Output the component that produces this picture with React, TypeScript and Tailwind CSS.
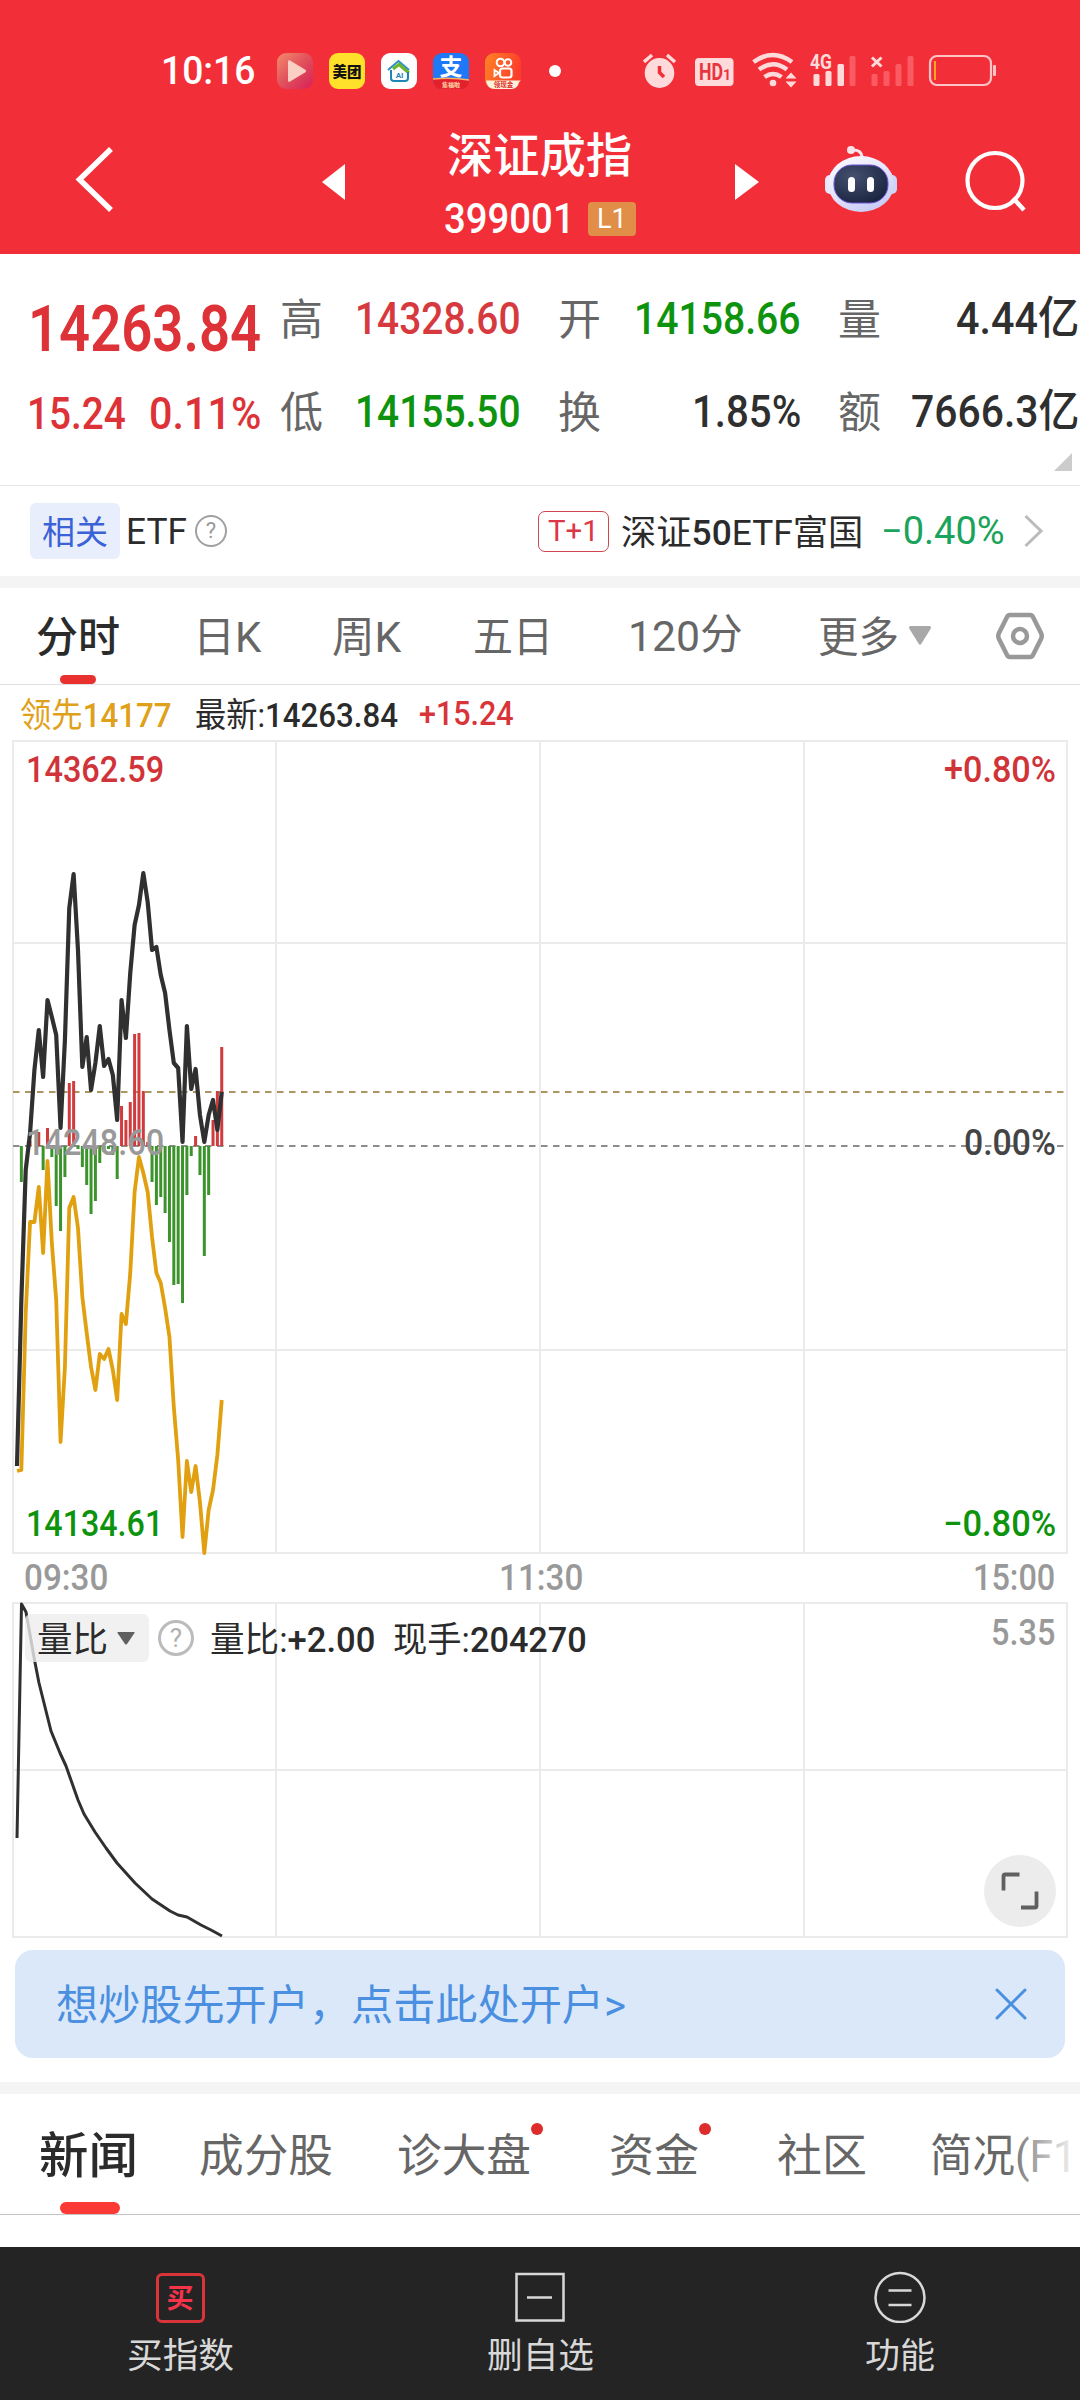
import { useLayoutEffect, useRef, ReactNode } from 'react';
import clsx from 'clsx';


type FitProps = {
    children: ReactNode;
    className?: string;
};

// Narrows (or widens) a line of text to the width of its box
const Fit = ({ children, className }: FitProps) => {

    const box = useRef<HTMLSpanElement>(null);
    const text = useRef<HTMLSpanElement>(null);

    useLayoutEffect(() => {
        if (!box.current || !text.current) return;
        const ratio = box.current.clientWidth / text.current.offsetWidth;
        // Chinese glyphs sit a bit higher than the latin ones
        const shift = /^[\u4e00-\u9fff]/.test(text.current.textContent ?? '') ? 0.045 : 0.01;
        text.current.style.transform = `translateY(${ shift }em) scaleX(${ ratio })`;
    }, [ children ])

    return (
        <span ref={ box } className={ clsx('block shrink-0 whitespace-nowrap leading-none', className) }>
            <span ref={ text } className="inline-block origin-left leading-none align-top">{ children }</span>
        </span>
    )
}


const CHART_LEFT = 12;
const CHART_TOP = 740;
const BASE = 1146;

const minuteX = (i: number) => 17 + 4.356 * i;

const price = [
    1466, 1300, 1170, 1133, 1070, 1030, 1077, 1000, 1017, 1035, 1128, 1040,
    908, 874, 950, 1067, 1037, 1090, 1063, 1026, 1066, 1059, 1075, 1120,
    1000, 1038, 973, 925, 905, 873, 902, 950, 947, 975, 993, 1030,
    1063, 1068, 1142, 1026, 1089, 1069, 1115, 1142, 1115, 1100, 1130, 1092,
];

const lead = [
    1471, 1470, 1313, 1222, 1222, 1187, 1253, 1161, 1243, 1300, 1442, 1367,
    1208, 1197, 1228, 1297, 1333, 1367, 1390, 1354, 1359, 1349, 1370, 1400,
    1314, 1324, 1273, 1192, 1157, 1173, 1192, 1237, 1273, 1283, 1308, 1337,
    1407, 1460, 1537, 1461, 1492, 1466, 1502, 1553, 1510, 1490, 1455, 1400,
];

// [ minute, end of the bar ]
const bars: [number, number][] = [
    [1, 1182], [3, 1141], [5, 1132], [6, 1170], [7, 1128], [8, 1157], [9, 1206], [10, 1231], [11, 1177],
    [12, 1083], [13, 1081], [14, 1149], [15, 1167], [16, 1185], [17, 1214], [18, 1201], [19, 1163],
    [20, 1152], [21, 1149], [22, 1155], [23, 1179], [24, 1106], [25, 1120], [26, 1102], [27, 1034],
    [28, 1033], [29, 1091], [30, 1142], [31, 1182], [32, 1205], [33, 1197], [34, 1213], [35, 1242],
    [36, 1285], [37, 1284], [38, 1303], [39, 1195], [40, 1156], [41, 1136], [42, 1175], [43, 1256],
    [44, 1195], [45, 1120], [46, 1091], [47, 1047],
];

const volumeRatio = '17,1838 21.5,1604 26,1612 34.5,1660 39,1683 51,1731 60,1753 66,1766 78,1800 84,1814 95,1832 106,1848 117,1863 135,1883 152,1899 170,1911 178,1915 187,1917 201,1925 211,1930 222,1936';

const toPoints = (values: number[]) => values.map((y, i) => `${ minuteX(i) },${ y }`).join(' ');


const AppIcons = () => (
    <div className="ml-[22px] flex gap-4">
        <svg width="36" height="36" viewBox="0 0 36 36">
            <defs>
                <linearGradient id="player" x1="0" y1="0" x2="1" y2="1">
                    <stop offset="0" stopColor="#f58a6c" />
                    <stop offset="0.5" stopColor="#e0505c" />
                    <stop offset="1" stopColor="#d81f58" />
                </linearGradient>
            </defs>
            <rect width="36" height="36" rx="9" fill="url(#player)" />
            <path d="M11 8.500Q11 6.500 13 7.500L28 16.500Q30 18 28 19.500L13 28.500Q11 29.500 11 27.500Z" fill="#fbd0c4" />
        </svg>
        <svg width="36" height="36" viewBox="0 0 36 36">
            <rect width="36" height="36" rx="9" fill="#ffe02b" />
            <text x="18" y="23.500" textAnchor="middle" fontSize="14.500" fontWeight="900" fontFamily="Noto Sans CJK SC, sans-serif" fill="#111">美团</text>
        </svg>
        <svg width="36" height="36" viewBox="0 0 36 36" fill="none">
            <rect width="36" height="36" rx="9" fill="#fff" />
            <path d="M7 17L17.500 8L28 17" stroke="#2b8fc0" strokeWidth="2" />
            <path d="M12 16L18 11.500L28 20" stroke="#6cb52d" strokeWidth="3" />
            <path d="M10 17V25Q10 28 13 28H24Q27 28 27 25V19" stroke="#1c86b8" strokeWidth="2" />
            <text x="18.500" y="25" textAnchor="middle" fontSize="8" fontWeight="700" fontFamily="Roboto, sans-serif" fill="#1c86b8">AI</text>
        </svg>
        <svg width="36" height="36" viewBox="0 0 36 36" className="overflow-visible">
            <rect width="36" height="36" rx="9" fill="#1f78f5" />
            <path d="M0 26Q18 24 36 27Q36 36 27 36H9Q0 36 0 26Z" fill="#e3202c" />
            <path d="M0 26Q18 24 36 27" stroke="#f7b36a" strokeWidth="1.500" fill="none" />
            <text x="18" y="21.500" textAnchor="middle" fontSize="23" fontWeight="700" fontFamily="Noto Sans CJK SC, sans-serif" fill="#fff">支</text>
            <text x="18" y="33.500" textAnchor="middle" fontSize="6" fontWeight="700" fontFamily="Noto Sans CJK SC, sans-serif" fill="#ffd9a8">集福啦</text>
        </svg>
        <svg width="36" height="36" viewBox="0 0 36 36" fill="none">
            <defs>
                <linearGradient id="camera" x1="0" y1="0" x2="1" y2="0.300">
                    <stop offset="0" stopColor="#ff8424" />
                    <stop offset="1" stopColor="#fb3d2c" />
                </linearGradient>
            </defs>
            <rect width="36" height="36" rx="9" fill="url(#camera)" />
            <circle cx="15.500" cy="9.500" r="3.800" stroke="#fff" strokeWidth="2" />
            <circle cx="23" cy="9.500" r="3.300" stroke="#fff" strokeWidth="2" />
            <rect x="15" y="15.500" width="11.500" height="9" rx="2.500" stroke="#fff" strokeWidth="2.200" />
            <path d="M14 20L9.500 17V23Z" stroke="#fff" strokeWidth="1.800" />
            <path d="M1 27.500H36Q34 28 33 32Q31 36 26 36H10Q2 36 1 27.500Z" fill="#fff0dc" />
            <text x="18.500" y="34" textAnchor="middle" fontSize="6.500" fontWeight="700" fontFamily="Noto Sans CJK SC, sans-serif" fill="#d9302a">领现金</text>
        </svg>
    </div>
)


const SystemIcons = () => (
    <svg width="354" height="40" viewBox="643 51 354 40" className="ml-[82px]" fill="none">
        <g fill="#ffdadb">
            <ellipse cx="659.500" cy="73" rx="14.800" ry="15" />
            <path d="M644 62L652 55M667 55L675 62" stroke="#ffdadb" strokeWidth="3.500" />
            <path d="M659.500 66V72.500L664 77" stroke="#f22f38" strokeWidth="3.500" />
            <rect x="695" y="58" width="38.500" height="28" rx="4" />
            <path d="M753.500 62Q773 48 792 62" stroke="#ffdadb" strokeWidth="4.500" fill="none" />
            <path d="M759 69.500Q773 59 787 69.500" stroke="#ffdadb" strokeWidth="4.500" fill="none" />
            <path d="M764.500 77Q773 71 781.500 77" stroke="#ffdadb" strokeWidth="4.500" fill="none" />
            <circle cx="773" cy="83" r="3.300" />
            <path d="M785.500 78.500L791 72.500L796.500 78.500ZM785.500 81.500L791 87.500L796.500 81.500Z" />
            <rect x="813.500" y="74" width="6" height="12" rx="1.500" />
            <rect x="825.500" y="71" width="6" height="15" rx="1.500" />
            <rect x="837.500" y="64" width="6.500" height="22" rx="1.500" />
        </g>
        <text x="699" y="80" fontSize="23" fontWeight="700" fontFamily="Roboto, sans-serif" fill="#e8343c" textLength="24" lengthAdjust="spacingAndGlyphs">HD</text>
        <text x="723" y="80" fontSize="14" fontWeight="700" fontFamily="Roboto, sans-serif" fill="#e8343c">1</text>
        <text x="810" y="69" fontSize="20" fontWeight="700" fontFamily="Roboto, sans-serif" fill="#ffdadb" textLength="22" lengthAdjust="spacingAndGlyphs">4G</text>
        <g fill="#fa5b62">
            <rect x="849.500" y="56" width="6" height="30" rx="1.500" />
            <rect x="871.500" y="74" width="6" height="12" rx="1.500" />
            <rect x="883.500" y="71" width="6" height="15" rx="1.500" />
            <rect x="895.500" y="64" width="6" height="22" rx="1.500" />
            <rect x="907.500" y="56" width="6" height="30" rx="1.500" />
        </g>
        <path d="M872 57.500L881.500 66.500M881.500 57.500L872 66.500" stroke="#ffdadb" strokeWidth="3" />
        <rect x="930" y="56" width="61" height="29" rx="7" stroke="#ffc4c6" strokeWidth="2.200" />
        <rect x="934" y="61" width="2" height="19" fill="#f5a623" />
        <rect x="993" y="65" width="3" height="11" rx="1" fill="#ffc4c6" />
    </svg>
)


const Robot = () => (
    <svg width="74" height="68" viewBox="824 145 74 68" fill="none">
        <defs>
            <linearGradient id="head" x1="0" y1="0" x2="0.600" y2="1">
                <stop offset="0" stopColor="#ffffff" />
                <stop offset="0.600" stopColor="#e3e2fb" />
                <stop offset="1" stopColor="#c9cdf6" />
            </linearGradient>
            <radialGradient id="visor" cx="0.350" cy="0.300" r="0.800">
                <stop offset="0" stopColor="#44506e" />
                <stop offset="1" stopColor="#18233f" />
            </radialGradient>
        </defs>
        <path d="M851 150Q862 149 862 158" stroke="#fbe3ea" strokeWidth="3" />
        <circle cx="851" cy="150" r="4" fill="#fbe3ea" />
        <rect x="825" y="175" width="12" height="19" rx="5" fill="#e6e8fc" />
        <rect x="885" y="175" width="12" height="19" rx="5" fill="#cfd5fa" />
        <ellipse cx="861" cy="184" rx="33" ry="28" fill="url(#head)" />
        <rect x="834" y="165" width="54" height="38" rx="18" fill="url(#visor)" stroke="#6a55d8" strokeWidth="1" />
        <rect x="848" y="177" width="7" height="15" rx="3.500" fill="#fff" />
        <rect x="867" y="177" width="7" height="15" rx="3.500" fill="#fff" />
    </svg>
)


const Header = () => (
    <header className="h-[254px] bg-[#f22f38] text-white">
        <div className="flex h-[142px] items-center pl-[161px]">
            <Fit className="w-[94px] text-[38px] font-medium">10:16</Fit>
            <AppIcons />
            <span className="ml-[28px] size-3 rounded-full bg-white" />
            <SystemIcons />
        </div>
        <div className="-mt-[20px] flex items-start">
            <svg width="40" height="68" viewBox="75 145 40 68" className="ml-[75px] mt-[23px]" fill="none">
                <path d="M111 149L79.500 179.500L111 210" stroke="#fff" strokeWidth="5.500" />
            </svg>
            <svg width="24" height="36" viewBox="0 0 24 36" className="ml-[207px] mt-[42px]">
                <path d="M0 18L23 0V36Z" fill="#fff" />
            </svg>
            <div className="ml-[101px] w-[191px]">
                <Fit className="mt-[8px] w-[185px] text-[47px] font-medium">深证成指</Fit>
                <div className="mt-[20px] flex items-center">
                    <Fit className="-ml-[3px] w-[131px] text-[43px] font-medium">399001</Fit>
                    <span className="ml-[13px] flex h-[34px] w-[48px] items-center justify-center rounded-[4px] bg-[#e08e48]">
                        <Fit className="w-[30px] text-[28px]">L1</Fit>
                    </span>
                </div>
            </div>
            <svg width="24" height="36" viewBox="0 0 24 36" className="ml-[97px] mt-[42px]">
                <path d="M24 18L0 0V36Z" fill="#fff" />
            </svg>
            <div className="ml-[65px] mt-[23px]"><Robot /></div>
            <svg width="62" height="64" viewBox="965 150 62 64" className="ml-[67px] mt-[28px]" fill="none">
                <ellipse cx="995" cy="180.500" rx="27.500" ry="27.500" stroke="#fff" strokeWidth="4.200" />
                <path d="M1013 198L1024 210" stroke="#fff" strokeWidth="4.500" />
            </svg>
        </div>
    </header>
)


type QuoteProps = {
    label: string;
    value: string;
    width: string;
    color: string;
    last?: boolean;
};

const Quote = ({ label, value, width, color, last }: QuoteProps) => (
    <>
        <span className="pt-[3px] text-[43px] leading-none text-[#666]">{ label }</span>
        <div className={ clsx('flex justify-end', last ? 'pr-px' : 'pr-[37px]') }>
            <Fit className={ clsx('text-[45px] font-medium', width, color) }>{ value }</Fit>
        </div>
    </>
)


const Quotes = () => (
    <section className="flex h-[231px]">
        <div className="w-[280px] pl-[28px] pt-[43px] text-[#dd3237]">
            <Fit className="w-[233px] text-[64px] font-semibold">14263.84</Fit>
            <div className="mt-[30px] flex">
                <Fit className="-ml-px w-[99px] text-[45px] font-medium">15.24</Fit>
                <Fit className="ml-[23px] w-[112px] text-[45px] font-medium">0.11%</Fit>
            </div>
        </div>
        <div className="grid h-[204px] grid-cols-[76px_202px_77px_203px_43px_199px] grid-rows-[93px_93px] items-center pt-[18px]">
            <Quote label="高" value="14328.60" width="w-[166px]" color="text-[#d63a3e]" />
            <Quote label="开" value="14158.66" width="w-[167px]" color="text-[#0d930d]" />
            <Quote label="量" value="4.44亿" width="w-[123px]" color="text-[#2f2f2f]" last />
            <Quote label="低" value="14155.50" width="w-[166px]" color="text-[#0d930d]" />
            <Quote label="换" value="1.85%" width="w-[109px]" color="text-[#2f2f2f]" />
            <Quote label="额" value="7666.3亿" width="w-[168px]" color="text-[#2f2f2f]" last />
        </div>
        <svg width="18" height="18" viewBox="0 0 18 18" className="-ml-[26px] mt-[199px] shrink-0">
            <path d="M18 0V18H0Z" fill="#ccc" />
        </svg>
    </section>
)


const RelatedEtf = () => (
    <section className="flex h-[91px] items-center border-t border-[#e6e6e6] pl-[30px]">
        <span className="flex h-[56px] w-[90px] items-center justify-center rounded-md bg-[#e8eefc]">
            <Fit className="w-[66px] text-[33px] text-[#3b62d6]">相关</Fit>
        </span>
        <Fit className="ml-[6px] w-[61px] text-[37px] text-[#2b2b2b]">ETF</Fit>
        <span className="ml-[8px] flex size-[32px] items-center justify-center rounded-full border-2 border-[#a0a0a0] text-[22px] leading-none text-[#999]">?</span>
        <span className="ml-[311px] flex h-[41px] w-[71px] items-center justify-center rounded-[7px] border-[1.5px] border-[#d0454e] text-[#dc3545]">
            <Fit className="w-[51px] text-[30px]">T+1</Fit>
        </span>
        <Fit className="ml-[12px] w-[242px] text-[35px] text-[#2b2b2b]">深证<span className="font-medium">50</span>ETF富国</Fit>
        <Fit className="ml-[18px] w-[124px] text-[38px] text-[#1aa35a]">−0.40%</Fit>
        <svg width="20" height="34" viewBox="0 0 20 34" className="ml-[19px]" fill="none">
            <path d="M1.500 2L17 17L1.500 32" stroke="#bbb" strokeWidth="3" />
        </svg>
    </section>
)


const Periods = () => (
    <nav className="relative flex h-[97px] items-center border-b border-[#e0e0e0] pl-[36px] text-[42px] text-[#666]">
        <Fit className="w-[84px] font-medium text-[#2b2b2b]">分时</Fit>
        <Fit className="ml-[73px] w-[68px]">日K</Fit>
        <Fit className="ml-[71px] w-[69px]">周K</Fit>
        <Fit className="ml-[72px] w-[80px]">五日</Fit>
        <Fit className="ml-[75px] w-[115px]"><span className="align-[-2px]">120</span>分</Fit>
        <Fit className="ml-[75px] w-[81px]">更多</Fit>
        <svg width="24" height="20" viewBox="0 0 24 20" className="ml-[9px]">
            <path d="M3 0H21Q24 0 22.500 3L13.500 17.500Q12 20 10.500 17.500L1.500 3Q0 0 3 0Z" fill="#a8a8a8" />
        </svg>
        <svg width="50" height="48" viewBox="0 0 50 48" className="ml-[63px]" fill="none">
            <path d="M14 3H35Q37 3 38 5L46 21Q47.500 24 46 27L38 43Q37 45 35 45H15Q13 45 12 43L4 27Q2.500 24 4 21L12 5Q13 3 15 3Z" stroke="#999" strokeWidth="4.500" />
            <circle cx="25" cy="24" r="7" stroke="#999" strokeWidth="4.500" />
        </svg>
        <span className="absolute bottom-0 left-[60px] h-[9px] w-[36px] rounded-full bg-[#e8302f]" />
    </nav>
)


const PriceChart = () => (
    <section className="relative ml-[12px] h-[814px] w-[1056px]">
        <svg width="1056" height="816" viewBox={ `${ CHART_LEFT } ${ CHART_TOP } 1056 816` } className="absolute inset-0" fill="none">
            <g stroke="#ebebeb" strokeWidth="2">
                <rect x="13" y="741" width="1054" height="812" />
                <path d="M276 741V1553M540 741V1553M804 741V1553M13 943H1067M13 1350H1067" />
            </g>
            <path d="M13 1092H1067" stroke="#ab9560" strokeWidth="1.800" strokeDasharray="6.500 5.500" />
            <path d={ `M13 ${ BASE }H1067` } stroke="#8c8c8c" strokeWidth="1.800" strokeDasharray="6.500 5.500" />
            { bars.map(([ i, y ]) => (
                <path key={ i } d={ `M${ minuteX(i) } ${ BASE }V${ y }` } stroke={ y < BASE ? '#d03b3d' : '#3c932b' } strokeWidth="3" />
            )) }
            <polyline points={ toPoints(lead) } stroke="#e0a010" strokeWidth="3.800" strokeLinejoin="round" />
            <polyline points={ toPoints(price) } stroke="#303030" strokeWidth="4.200" strokeLinejoin="round" />
        </svg>
        <div className="relative flex h-full flex-col pl-[14px] pr-[12px] text-[36px] font-medium">
            <div className="mt-[12px] flex justify-between text-[#d03338]">
                <Fit className="w-[138px]">14362.59</Fit>
                <Fit className="w-[112px]">+0.80%</Fit>
            </div>
            <div className="mt-[337px] flex justify-between">
                <Fit className="w-[138px] text-[#999]">14248.60</Fit>
                <Fit className="w-[92px] text-[#444]">0.00%</Fit>
            </div>
            <div className="mt-[345px] flex justify-between text-[#0d930d]">
                <Fit className="w-[137px]">14134.61</Fit>
                <Fit className="w-[113px]">−0.80%</Fit>
            </div>
        </div>
    </section>
)


const VolumeRatioChart = () => (
    <section className="relative ml-[12px] h-[336px] w-[1056px]">
        <svg width="1056" height="336" viewBox={ `${ CHART_LEFT } 1602 1056 336` } className="absolute inset-0" fill="none">
            <g stroke="#ebebeb" strokeWidth="2">
                <rect x="13" y="1603" width="1054" height="334" />
                <path d="M276 1603V1937M540 1603V1937M804 1603V1937M13 1770H1067" />
            </g>
            <polyline points={ volumeRatio } stroke="#303030" strokeWidth="3" strokeLinejoin="round" />
        </svg>
        <div className="relative flex items-center pl-[13px] pt-[12px] text-[35px] text-[#2b2b2b]">
            <span className="flex h-[48px] w-[124px] items-center rounded-md bg-[#eeeeee]/80 pl-[12px]">
                <Fit className="w-[71px]">量比</Fit>
                <svg width="18" height="13" viewBox="0 0 18 13" className="ml-[9px]">
                    <path d="M1 0H17Q18 0 17.500 1L10 12Q9 13 8 12L0.500 1Q0 0 1 0Z" fill="#606060" />
                </svg>
            </span>
            <span className="ml-[9px] flex size-[36px] items-center justify-center rounded-full border-[3px] border-[#bbb] text-[26px] leading-none text-[#b0b0b0]">?</span>
            <Fit className="ml-[16px] w-[165px]">量比:<span className="font-medium">+2.00</span></Fit>
            <Fit className="ml-[18px] w-[194px]">现手:<span className="font-medium">204270</span></Fit>
            <Fit className="-mt-[10px] ml-auto mr-[13px] w-[64px] text-[36px] font-medium text-[#999]">5.35</Fit>
        </div>
        <button className="absolute bottom-[11px] right-[12px] flex size-[72px] items-center justify-center rounded-full bg-[#ececec]">
            <svg width="38" height="38" viewBox="0 0 38 38" fill="none" stroke="#606060" strokeWidth="3.800">
                <path d="M2.500 18.500V4Q2.500 2.500 4 2.500H18.500M35.500 19.500V34Q35.500 35.500 34 35.500H20" />
            </svg>
        </button>
    </section>
)


const newsTabs = [
    { name: '成分股', margin: 'ml-[61px]', width: 'w-[134px]' },
    { name: '诊大盘', margin: 'ml-[64px]', width: 'w-[134px]', dot: true },
    { name: '资金', margin: 'ml-[78px]', width: 'w-[90px]', dot: true },
    { name: '社区', margin: 'ml-[78px]', width: 'w-[90px]' },
    { name: '简况(F10)', margin: 'ml-[63px]', width: 'w-[186px]' },
];

const NewsTabs = () => (
    <nav className="relative flex h-[121px] items-center overflow-hidden border-b border-[#c4c4c4] pl-[39px]">
        <Fit className="w-[99px] text-[49px] font-medium text-[#2b2b2b]">新闻</Fit>
        { newsTabs.map(({ name, margin, width, dot }) => (
            <div key={ name } className={ clsx('relative shrink-0', margin) }>
                <Fit className={ clsx('text-[45px] text-[#666]', width) }>{ name }</Fit>
                { dot && <span className="absolute -right-[12px] -top-[9px] size-3 rounded-full bg-[#dc2c2c]" /> }
            </div>
        )) }
        <span className="absolute bottom-0 left-[60px] h-[12px] w-[60px] rounded-full bg-[#fb3a36]" />
        <span className="absolute inset-y-0 right-0 w-[76px] bg-linear-to-r from-white/0 to-white" />
    </nav>
)


const BottomBar = () => (
    <footer className="grid h-[153px] grid-cols-3 bg-[#242424] pt-[24px] text-[35px] text-[#d8d8d8]">
        <div className="flex flex-col items-center">
            <span className="mt-[2px] flex h-[50px] w-[49px] items-center justify-center rounded-[6px] border-[3px] border-[#d93439] text-[#f5344a]">
                <Fit className="w-[27px] text-[27px] font-bold">买</Fit>
            </span>
            <Fit className="mt-[14px] w-[107px]">买指数</Fit>
        </div>
        <div className="flex flex-col items-center">
            <svg width="50" height="52" viewBox="0 0 50 52" fill="none" stroke="#d8d8d8" strokeWidth="2.500">
                <path d="M1.500 3H48.500V49.500H1.500ZM12 26.500H37" />
            </svg>
            <Fit className="mt-[14px] w-[107px]">删自选</Fit>
        </div>
        <div className="flex flex-col items-center">
            <svg width="52" height="52" viewBox="0 0 52 52" fill="none" stroke="#d8d8d8" strokeWidth="2.500">
                <circle cx="26" cy="26.500" r="24.500" />
                <path d="M14.500 19.500H37.500M14.500 34H37.500" />
            </svg>
            <Fit className="mt-[14px] w-[70px]">功能</Fit>
        </div>
    </footer>
)


const App = () => {
    return (
        <main className="flex h-[2400px] w-[1080px] flex-col overflow-hidden bg-white font-['Roboto','Noto_Sans_CJK_SC',sans-serif] *:shrink-0">
            <Header />
            <Quotes />
            <RelatedEtf />
            <div className="h-3 bg-[#f4f4f4]" />
            <Periods />
            <div className="flex h-[55px] items-center pl-[20px] text-[34px]">
                <Fit className="w-[152px] text-[#dfa01a]">领先<span className="font-medium">14177</span></Fit>
                <Fit className="ml-[23px] w-[203px] text-[#2b2b2b]">最新:<span className="font-medium">14263.84</span></Fit>
                <Fit className="ml-[21px] w-[95px] font-medium text-[#d8353a]">+15.24</Fit>
            </div>
            <PriceChart />
            <div className="flex h-[48px] items-center justify-between pl-[24px] pr-[25px] text-[36px] font-medium text-[#999]">
                <Fit className="w-[84px]">09:30</Fit>
                <Fit className="w-[84px]">11:30</Fit>
                <Fit className="w-[82px]">15:00</Fit>
            </div>
            <VolumeRatioChart />
            <div className="mx-[15px] mt-[12px] flex h-[108px] items-center justify-between rounded-[18px] bg-[#dae8fa] pl-[41px] pr-[38px] text-[#4a8fe0]">
                <Fit className="w-[570px] text-[42px]">想炒股先开户，点击此处开户&gt;</Fit>
                <svg width="32" height="32" viewBox="0 0 32 32" fill="none" stroke="currentColor" strokeWidth="3" strokeLinecap="round">
                    <path d="M2 2L30 30M30 2L2 30" />
                </svg>
            </div>
            <div className="mt-[24px] h-3 bg-[#f4f4f4]" />
            <NewsTabs />
            <div className="h-8" />
            <BottomBar />
        </main>
    )
}

export default App
